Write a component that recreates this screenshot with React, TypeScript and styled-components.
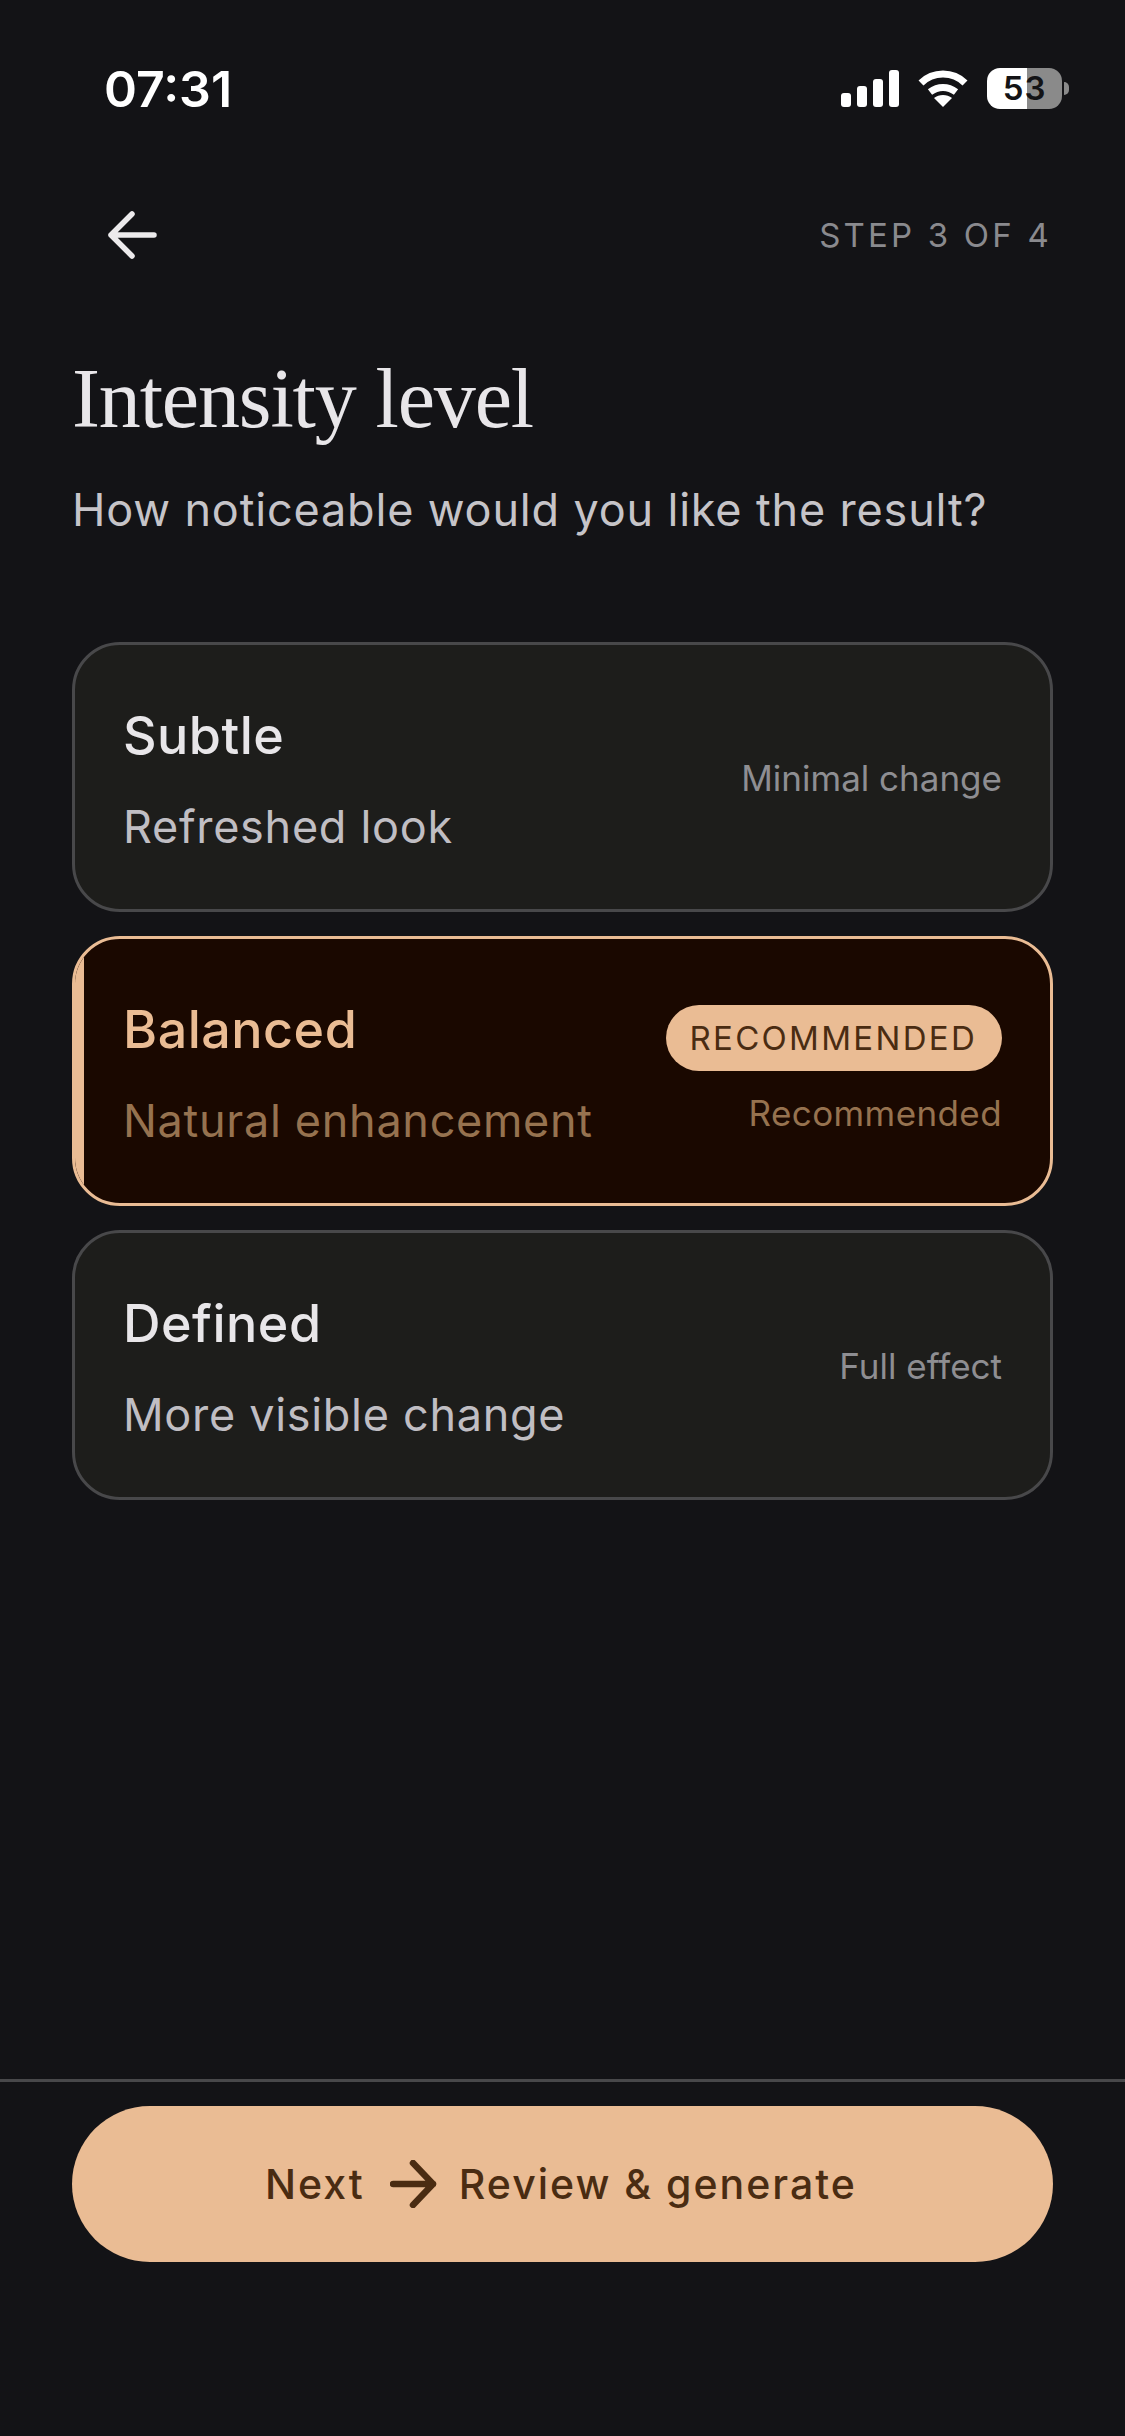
import React from 'react';
import styled, { createGlobalStyle } from 'styled-components';

const accent = '#eabc94';
const sans = '"Inter", "Noto Sans", sans-serif';

const GlobalStyle = createGlobalStyle`
  html, body {
    margin: 0;
    padding: 0;
    background: #131316;
  }
`;

const Screen = styled.div`
  width: 1125px;
  min-height: 2436px;
  display: flex;
  flex-direction: column;
  background: #131316;
  font-family: ${sans};
  box-sizing: border-box;
`;

const StatusBar = styled.div`
  height: 84px;
  padding: 46px 56px 0 104px;
  display: flex;
  align-items: center;
  justify-content: space-between;
`;

const Time = styled.span`
  font-size: 50px;
  font-weight: 600;
  line-height: 84px;
  padding-top: 2px;
  color: #ffffff;
`;

const StatusIcons = styled.div`
  display: flex;
  align-items: center;
  gap: 19px;
`;

const BatteryWrap = styled.div`
  display: flex;
  align-items: center;
  gap: 2px;
`;

const Battery = styled.div`
  width: 75px;
  height: 41px;
  border-radius: 13px;
  background: linear-gradient(90deg, #ffffff 0 53%, #8a8a8a 53% 100%);
  display: flex;
  align-items: center;
  justify-content: center;
  font-size: 33px;
  font-weight: 600;
  letter-spacing: 1px;
  color: #131316;
`;

const BatteryTip = styled.div`
  width: 5px;
  height: 13px;
  border-radius: 0 5px 5px 0;
  background: #8a8a8a;
`;

const Nav = styled.div`
  margin-top: 75px;
  height: 60px;
  padding: 0 73px 0 107px;
  display: flex;
  align-items: center;
  justify-content: space-between;
`;

const StepLabel = styled.span`
  font-size: 33px;
  letter-spacing: 3.2px;
  color: #8a8a8e;
`;

const Content = styled.main`
  flex: 1;
  padding: 0 72px;
`;

const Title = styled.h1`
  margin: 84px 0 0;
  font-family: "Liberation Serif", serif;
  font-size: 84px;
  font-weight: 400;
  line-height: 100px;
  letter-spacing: -1.15px;
  color: #e8e6e9;
`;

const Subtitle = styled.p`
  margin: 33px 0 0;
  font-size: 45px;
  line-height: 56px;
  letter-spacing: 0.83px;
  color: #c6c4c8;
`;

const Options = styled.div`
  margin-top: 104px;
  display: flex;
  flex-direction: column;
  gap: 24px;
`;

const Card = styled.div<{ $selected?: boolean }>`
  position: relative;
  overflow: hidden;
  height: 270px;
  box-sizing: border-box;
  padding: 0 48px;
  display: flex;
  align-items: center;
  justify-content: space-between;
  border: 3px solid ${(p) => (p.$selected ? accent : '#48484a')};
  border-radius: 48px;
  background: ${(p) => (p.$selected ? '#1a0800' : '#1d1d1b')};

  ${(p) =>
    p.$selected &&
    `
    &::before {
      content: '';
      position: absolute;
      left: 0;
      top: 0;
      bottom: 0;
      width: 9px;
      background: ${accent};
    }
  `}
`;

const CardText = styled.div`
  display: flex;
  flex-direction: column;
  gap: 33px;
  padding-top: 6px;
`;

const CardTitle = styled.span<{ $selected?: boolean }>`
  font-size: 52px;
  font-weight: 500;
  line-height: 60px;
  letter-spacing: 0.5px;
  color: ${(p) => (p.$selected ? accent : '#e8e6e9')};
`;

const CardSub = styled.span<{ $selected?: boolean }>`
  font-size: 45px;
  line-height: 56px;
  letter-spacing: 0.7px;
  color: ${(p) => (p.$selected ? '#96724f' : '#c0bec3')};
`;

const CardSide = styled.div`
  display: flex;
  flex-direction: column;
  align-items: flex-end;
  gap: 20px;
  padding-top: 2px;
`;

const Note = styled.span<{ $selected?: boolean }>`
  font-size: 35px;
  line-height: 44px;
  color: ${(p) => (p.$selected ? '#96724f' : '#8e8e92')};
  letter-spacing: ${(p) => (p.$selected ? '0.4px' : '0')};
`;

const Badge = styled.span`
  height: 66px;
  margin-top: -5px;
  padding: 0 25px 0 24px;
  display: flex;
  align-items: center;
  border-radius: 33px;
  background: ${accent};
  color: #4a2c12;
  font-size: 33px;
  letter-spacing: 2.3px;
`;

const Footer = styled.footer`
  border-top: 3px solid #48484a;
  padding: 24px 72px 174px;
`;

const NextButton = styled.button`
  width: 100%;
  height: 156px;
  border: 0;
  padding: 0 3px 0 0;
  border-radius: 78px;
  background: ${accent};
  color: #4a2c12;
  font-family: ${sans};
  font-size: 41px;
  font-weight: 500;
  letter-spacing: 2px;
  display: flex;
  align-items: center;
  justify-content: center;
  gap: 22px;
`;

const NextArrowSvg = styled.svg`
  margin-left: 3px;
`;

const options = [
  { title: 'Subtle', sub: 'Refreshed look', note: 'Minimal change' },
  { title: 'Balanced', sub: 'Natural enhancement', note: 'Recommended', selected: true },
  { title: 'Defined', sub: 'More visible change', note: 'Full effect' },
];

const BackArrow = () => (
  <svg width="50" height="48" viewBox="0 0 50 48" fill="none" stroke="#eceaec" strokeWidth="5.5" strokeLinecap="round" strokeLinejoin="round">
    <path d="M47 24H4M25 3 4 24l21 21" />
  </svg>
);

const NextArrow = () => (
  <NextArrowSvg width="47" height="48" viewBox="0 0 47 48" fill="none" stroke="#4a2c12" strokeWidth="6.5" strokeLinecap="round" strokeLinejoin="round">
    <path d="M3 24H43M23 3l20 21-20 21" />
  </NextArrowSvg>
);

const SignalIcon = () => (
  <svg width="58" height="37" viewBox="0 0 58 37" fill="#fff">
    <rect x="0" y="23" width="10" height="14" rx="3" />
    <rect x="16" y="16" width="10" height="21" rx="3" />
    <rect x="32" y="9" width="10" height="28" rx="3" />
    <rect x="48" y="0" width="10" height="37" rx="3" />
  </svg>
);

const WifiIcon = () => (
  <svg width="50" height="37" viewBox="0 0 50 37" fill="none" stroke="#fff" strokeWidth="7">
    <path d="M3 13C15 1 35 1 47 13" />
    <path d="M12 22c8-6 18-6 26 0" />
    <path d="M25 37l-9-9c5-4 13-4 18 0z" fill="#fff" stroke="none" />
  </svg>
);

const App: React.FC = () => (
  <Screen>
    <GlobalStyle />
    <StatusBar>
      <Time>07:31</Time>
      <StatusIcons>
        <SignalIcon />
        <WifiIcon />
        <BatteryWrap>
          <Battery>53</Battery>
          <BatteryTip />
        </BatteryWrap>
      </StatusIcons>
    </StatusBar>
    <Nav>
      <BackArrow />
      <StepLabel>STEP 3 OF 4</StepLabel>
    </Nav>
    <Content>
      <Title>Intensity level</Title>
      <Subtitle>How noticeable would you like the result?</Subtitle>
      <Options>
        {options.map((o) => (
          <Card key={o.title} $selected={o.selected}>
            <CardText>
              <CardTitle $selected={o.selected}>{o.title}</CardTitle>
              <CardSub $selected={o.selected}>{o.sub}</CardSub>
            </CardText>
            <CardSide>
              {o.selected && <Badge>RECOMMENDED</Badge>}
              <Note $selected={o.selected}>{o.note}</Note>
            </CardSide>
          </Card>
        ))}
      </Options>
    </Content>
    <Footer>
      <NextButton>
        Next
        <NextArrow />
        Review &amp; generate
      </NextButton>
    </Footer>
  </Screen>
);

export default App;
